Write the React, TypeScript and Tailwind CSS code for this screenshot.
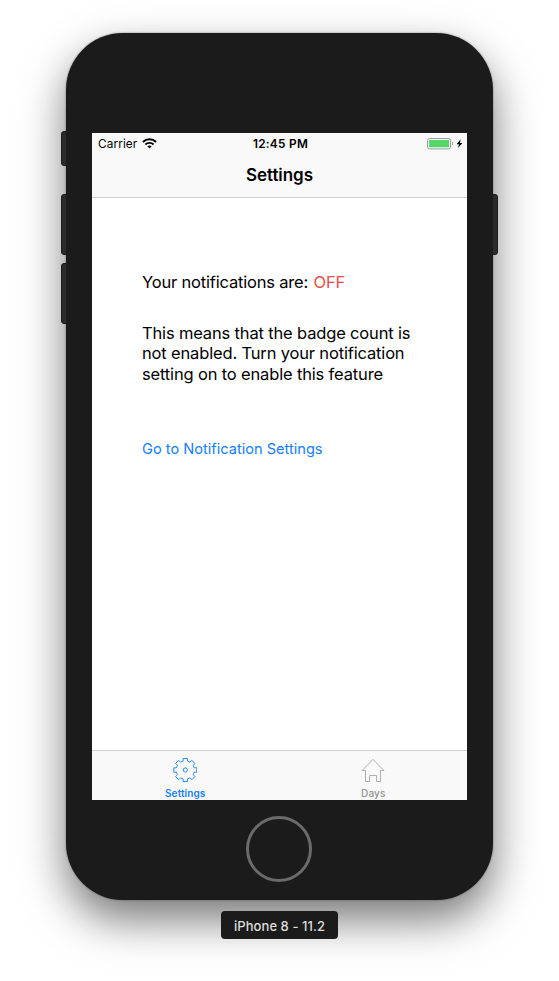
import React from "react";

const teeth = [0, 45, 90, 135, 180, 225, 270, 315];

function gearPath(): string {
  const points: string[] = [];
  const profile: [number, number][] = [
    [-2.2, -8.9],
    [-2.2, -11.5],
    [2.2, -11.5],
    [2.2, -8.9],
  ];
  for (const deg of teeth) {
    const a = (deg * Math.PI) / 180;
    for (const [x, y] of profile) {
      const px = x * Math.cos(a) - y * Math.sin(a);
      const py = x * Math.sin(a) + y * Math.cos(a);
      points.push(`${px.toFixed(2)} ${py.toFixed(2)}`);
    }
  }
  return `M${points.join("L")}Z`;
}

function GearIcon() {
  return (
    <svg className="h-6 w-6" viewBox="-12.3 -12 24 24" fill="none" stroke="currentColor" strokeWidth=".9">
      <path d={gearPath()} strokeLinejoin="round" />
      <circle r="2.1" />
    </svg>
  );
}

function HouseIcon() {
  return (
    <svg className="h-6 w-6 text-[#a6a6a6]" viewBox="0 0 24 24" fill="none" stroke="currentColor" strokeWidth=".9">
      <path d="M12 1.4L1.1 12.5H4.5V23.5H8.5V17.5H15.5V23.5H19.5V12.5H22.9Z" />
    </svg>
  );
}

function WifiIcon() {
  return (
    <svg className="h-[11px] w-[15px]" viewBox="0 0 15 11" fill="none" stroke="#000">
      <path d="M.9 3.9C4.6.5 10.4.5 14.1 3.9" strokeWidth="2" />
      <path d="M3.4 6.5C5.7 4.4 9.3 4.4 11.6 6.5" strokeWidth="1.8" />
      <path d="M5.3 8.3C6.5 7.2 8.5 7.2 9.7 8.3L7.5 10.6Z" fill="#000" stroke="none" />
    </svg>
  );
}

function Battery() {
  return (
    <svg className="h-3 w-[36px]" viewBox="0 0 36 12">
      <rect x=".5" y=".5" width="23" height="10.4" rx="2" fill="none" stroke="#9c9c9c" />
      <rect x="2" y="2.1" width="20" height="7.2" rx=".5" fill="#53d769" />
      <path d="M25 3.8C26.5 4.4 26.5 7 25 7.6Z" fill="#999" />
      <path d="M33.6 1.2L29.6 6.3H32L31 10L35.4 4.9H33Z" fill="#000" />
    </svg>
  );
}

const sideKey = "w-[6px] border border-[#1b1b1b] bg-[#2b2b2b]";

export default function App() {
  return (
    <div className="flex h-[981px] w-[559px] flex-col items-center overflow-hidden bg-white pt-[33px] font-['Inter',sans-serif] text-black">
      <div className="flex w-[437px]">
        <div className="z-10 -mr-px flex w-[6px] flex-col pt-[98px]">
          <div className={`${sideKey} h-[35px] rounded-l-[3px]`} />
          <div className={`${sideKey} mt-7 h-[61px] rounded-l-[3px]`} />
          <div className={`${sideKey} mt-2 h-[61px] rounded-l-[3px]`} />
        </div>

        <div className="flex h-[867px] w-[427px] flex-col items-center rounded-[57px] bg-[#1b1b1b] pt-[100px] shadow-[0_0_2px_rgba(0,0,0,0.45),0_20px_44px_rgba(0,0,0,0.53)]">
          <div className="flex h-[667px] w-[375px] flex-col bg-white">
            <header className="h-[65px] border-b border-[#cfcfcf] bg-[#f9f9f9]">
              <div className="grid h-5 grid-cols-[1fr_auto_1fr] items-center pl-[6px] pr-1 text-[11.8px] leading-5">
                <div className="flex items-center gap-[5px]">
                  <span className="pt-px tracking-[0.1px]">Carrier</span>
                  <WifiIcon />
                </div>
                <span className="pt-px font-semibold tracking-[0.3px]">12:45 PM</span>
                <div className="flex justify-end">
                  <Battery />
                </div>
              </div>
              <h1 className="text-center text-[17px] font-semibold leading-[44px] tracking-[-0.05px]">Settings</h1>
            </header>

            <main className="flex-1 pl-[50px] pt-[74px] text-[16.5px] leading-5">
              <p className="whitespace-nowrap tracking-[-0.19px]">
                Your notifications are: <span className="ml-px text-[#eb4d47]">OFF</span>
              </p>
              <p className="mt-[31px] whitespace-nowrap leading-[20.3px] tracking-[-0.16px]">
                This means that the badge count is
                <br />
                not enabled. Turn your notification
                <br />
                setting on to enable this feature
              </p>
              <button className="mt-[55px] block whitespace-nowrap text-[14.6px] leading-5 text-[#147efb]">
                Go to Notification Settings
              </button>
            </main>

            <nav className="grid h-[50px] grid-cols-2 border-t border-[#cfcfcf] bg-[#f9f9f9] text-[10px] font-medium leading-3">
              <div className="flex flex-col items-center pr-px pt-[7px] text-[#147efb]">
                <GearIcon />
                <span className="mt-[5px] font-semibold tracking-[0.1px]">Settings</span>
              </div>
              <div className="flex flex-col items-center pt-[7px] text-[#929292]">
                <HouseIcon />
                <span className="mt-[5px] tracking-[0.1px]">Days</span>
              </div>
            </nav>
          </div>
          <div className="mr-px mt-4 h-[66px] w-[66px] rounded-full border-3 border-[#6b6b6b]" />
        </div>

        <div className="z-10 -ml-px w-[6px] pt-[161px]">
          <div className={`${sideKey} h-[61px] rounded-r-[3px]`} />
        </div>
      </div>

      <div className="z-10 mt-[11px] flex h-7 w-[117px] items-center justify-center rounded bg-[#1b1b1b] pt-[3px] text-[13px] font-medium tracking-[0.07px] text-[#dedede]">
        iPhone 8 - 11.2
      </div>
    </div>
  );
}
